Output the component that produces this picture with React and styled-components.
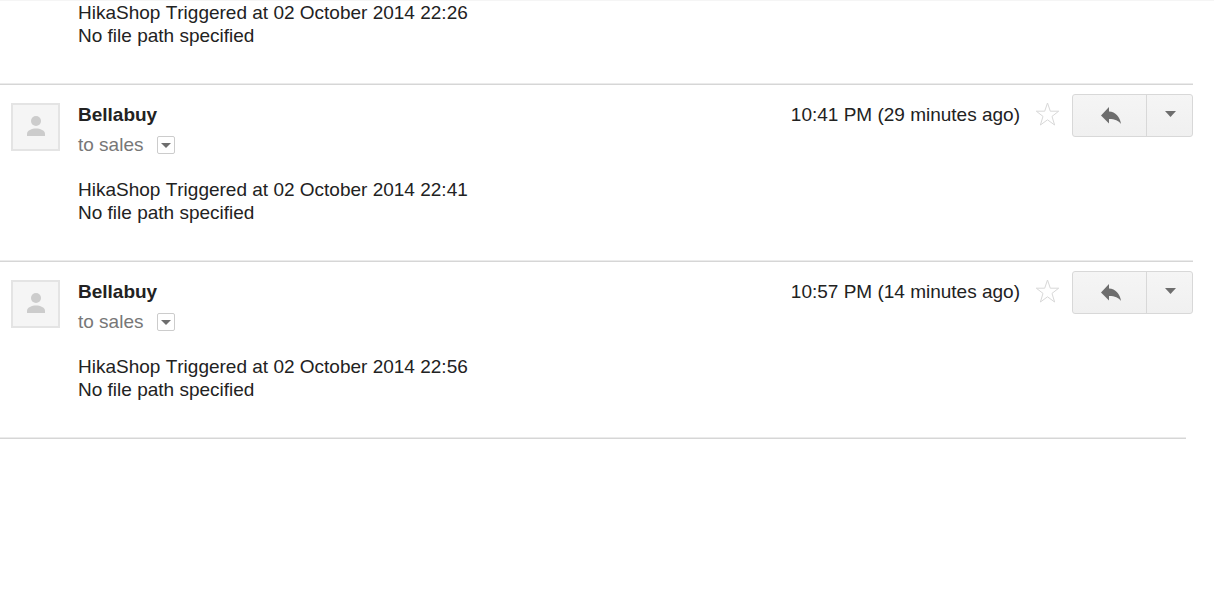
import React from "react";
import styled, { createGlobalStyle } from "styled-components";

const Global = createGlobalStyle`
  *, *::before, *::after { box-sizing: border-box; }
  body {
    margin: 0;
    background: #fff;
    color: #222;
    font-family: "Liberation Sans", Arial, sans-serif;
    font-size: 19px;
    font-kerning: none;
    line-height: 23px;
  }
`;

const Page = styled.main`
  padding-right: 21px;
  border-top: 1px solid #f5f5f5;
`;

const Message = styled.article`
  & + & {
    padding-top: 1px;
    border-top: 1px solid #ebebeb;
    box-shadow: inset 0 1px #d6d6d6;
  }
`;

const Header = styled.header`
  display: flex;
  align-items: flex-start;
  padding: 9px 0 0 11px;
`;

const Avatar = styled.div`
  display: flex;
  flex: none;
  width: 49px;
  height: 48px;
  margin: 9px 18px 0 0;
  background: #f5f5f5;
  border: 2px solid #e4e4e4;
`;

const Sender = styled.div`
  flex: 1;
  padding-top: 9px;
`;

const Name = styled.h2`
  margin: 0;
  font-size: 19px;
  line-height: 23px;
`;

const Recipient = styled.div`
  display: flex;
  align-items: center;
  gap: 14px;
  margin-top: 7px;
  color: #777;
`;

const DetailsButton = styled.button`
  display: flex;
  align-items: center;
  justify-content: center;
  width: 18px;
  height: 18px;
  padding: 2px 0 0;
  background: #fff;
  border: 1px solid #ccc;
  border-radius: 2px;
`;

const Time = styled.time`
  padding-top: 9px;
  white-space: nowrap;
`;

const StarButton = styled.button`
  display: flex;
  margin: 7px 12px 0 15px;
  padding: 0;
  background: none;
  border: 0;
`;

const Actions = styled.div`
  display: flex;
  height: 43px;
  background: linear-gradient(#f5f5f5, #f0f0f0);
  border: 1px solid #d8d8d8;
  border-radius: 3px;
`;

const ActionButton = styled.button`
  display: flex;
  align-items: center;
  justify-content: center;
  padding: 0;
  background: none;
  border: 0;
`;

const ReplyButton = styled(ActionButton)`
  width: 73px;
  padding-left: 3px;
`;

const MoreButton = styled(ActionButton)`
  width: 46px;
  padding: 0 0 4px 2px;
  border-left: 1px solid #d8d8d8;
`;

const Body = styled.p`
  margin: 0;
  padding: ${(p) => (p.$continued ? "0" : "22px")} 0 36px 78px;
`;

const EndRule = styled.hr`
  height: 2px;
  margin: 0 7px 0 0;
  background: #d6d6d6;
  border: 0;
  border-top: 1px solid #ebebeb;
`;

const Caret = ({ width, height }) => (
  <svg width={width} height={height} viewBox="0 0 10 6" preserveAspectRatio="none" aria-hidden="true">
    <path d="M0 0h10L5 6z" fill="#6e6e6e" />
  </svg>
);

const Person = () => (
  <svg width="45" height="44" viewBox="0 0 45 44" aria-hidden="true">
    <circle cx="23" cy="16" r="5" fill="#ccc" />
    <path d="M14 31v-2.500c0-3 5-5 9-5s9 2 9 5v2.500z" fill="#ccc" />
  </svg>
);

const Star = () => (
  <svg width="25" height="26" viewBox="0 0 25 26" aria-hidden="true">
    <path d="M12.5 2l2.8 8.200h8.400l-6.700 5.200 2.600 8.600-7.100-5.200L5.400 24 8 15.400 1.300 10.200h8.400z" fill="#fff" stroke="#d8d8d8" />
  </svg>
);

const Reply = () => (
  <svg width="20" height="18" viewBox="0 0 20 18" aria-hidden="true">
    <path d="M0 8.500L8 0v4.500c6.500 .5 11 5 12 12.500-2.500-3.500-6-5-12-5v4.500z" fill="#6e6e6e" />
  </svg>
);

const MessageBody = ({ stamp, continued }) => (
  <Body $continued={continued}>
    HikaShop Triggered at 02 October 2014 {stamp}
    <br />
    No file path specified
  </Body>
);

const messages = [
  { time: "10:41 PM (29 minutes ago)", stamp: "22:41" },
  { time: "10:57 PM (14 minutes ago)", stamp: "22:56" },
];

export default function App() {
  return (
    <>
      <Global />
      <Page>
        <Message>
          <MessageBody stamp="22:26" continued />
        </Message>
        {messages.map((m) => (
          <Message key={m.stamp}>
            <Header>
              <Avatar><Person /></Avatar>
              <Sender>
                <Name>Bellabuy</Name>
                <Recipient>
                  to sales
                  <DetailsButton aria-label="Show details"><Caret width="10" height="5" /></DetailsButton>
                </Recipient>
              </Sender>
              <Time>{m.time}</Time>
              <StarButton aria-label="Star"><Star /></StarButton>
              <Actions>
                <ReplyButton aria-label="Reply"><Reply /></ReplyButton>
                <MoreButton aria-label="More"><Caret width="11" height="6" /></MoreButton>
              </Actions>
            </Header>
            <MessageBody stamp={m.stamp} />
          </Message>
        ))}
        <EndRule />
      </Page>
    </>
  );
}
